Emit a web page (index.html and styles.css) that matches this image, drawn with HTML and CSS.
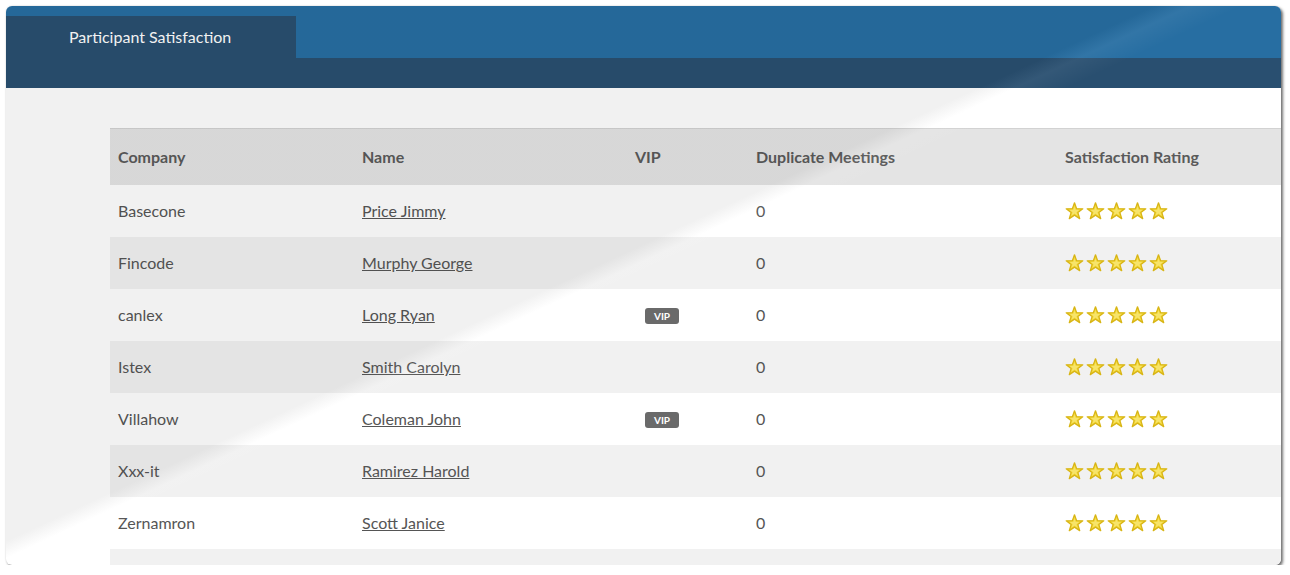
FILE: index.html
```html
<!DOCTYPE html>
<html>
<head>
<meta charset="utf-8">
<link rel="stylesheet" href="styles.css">
</head>
<body>
<svg width="0" height="0" class="defs">
  <defs>
    <symbol id="star" viewBox="0 0 19 18">
      <polygon points="9.5,0.8 11.6,6.6 17.8,6.8 12.9,10.6 14.7,16.6 9.5,13.1 4.3,16.6 6.1,10.6 1.2,6.8 7.4,6.6" fill="#f3d83c" stroke="#d8b515" stroke-width="1.3" stroke-linejoin="round"/>
      <polygon points="9.5,4.5 10.7,8 14.2,8.1 11.4,10.2 12.4,13.6 9.5,11.6 6.6,13.6 7.6,10.2 4.8,8.1 8.3,8" fill="#f7e46a"/>
    </symbol>
  </defs>
</svg>
<div class="window">
  <div class="topbar">
    <div class="tab">Participant Satisfaction</div>
  </div>
  <div class="subbar"></div>
  <div class="content">
    <table class="grid">
      <colgroup>
        <col class="c-company"><col class="c-name"><col class="c-vip"><col class="c-dup"><col class="c-sat">
      </colgroup>
      <thead>
        <tr><th>Company</th><th>Name</th><th>VIP</th><th>Duplicate Meetings</th><th>Satisfaction Rating</th></tr>
      </thead>
      <tbody>
        <tr><td>Basecone</td><td><a href="#">Price Jimmy</a></td><td></td><td>0</td><td class="stars"><svg><use href="#star"/></svg><svg><use href="#star"/></svg><svg><use href="#star"/></svg><svg><use href="#star"/></svg><svg><use href="#star"/></svg></td></tr>
        <tr><td>Fincode</td><td><a href="#">Murphy George</a></td><td></td><td>0</td><td class="stars"><svg><use href="#star"/></svg><svg><use href="#star"/></svg><svg><use href="#star"/></svg><svg><use href="#star"/></svg><svg><use href="#star"/></svg></td></tr>
        <tr><td>canlex</td><td><a href="#">Long Ryan</a></td><td><span class="vip">VIP</span></td><td>0</td><td class="stars"><svg><use href="#star"/></svg><svg><use href="#star"/></svg><svg><use href="#star"/></svg><svg><use href="#star"/></svg><svg><use href="#star"/></svg></td></tr>
        <tr><td>Istex</td><td><a href="#">Smith Carolyn</a></td><td></td><td>0</td><td class="stars"><svg><use href="#star"/></svg><svg><use href="#star"/></svg><svg><use href="#star"/></svg><svg><use href="#star"/></svg><svg><use href="#star"/></svg></td></tr>
        <tr><td>Villahow</td><td><a href="#">Coleman John</a></td><td><span class="vip">VIP</span></td><td>0</td><td class="stars"><svg><use href="#star"/></svg><svg><use href="#star"/></svg><svg><use href="#star"/></svg><svg><use href="#star"/></svg><svg><use href="#star"/></svg></td></tr>
        <tr><td>Xxx-it</td><td><a href="#">Ramirez Harold</a></td><td></td><td>0</td><td class="stars"><svg><use href="#star"/></svg><svg><use href="#star"/></svg><svg><use href="#star"/></svg><svg><use href="#star"/></svg><svg><use href="#star"/></svg></td></tr>
        <tr><td>Zernamron</td><td><a href="#">Scott Janice</a></td><td></td><td>0</td><td class="stars"><svg><use href="#star"/></svg><svg><use href="#star"/></svg><svg><use href="#star"/></svg><svg><use href="#star"/></svg><svg><use href="#star"/></svg></td></tr>
        <tr><td>&nbsp;</td><td></td><td></td><td></td><td></td></tr>
      </tbody>
    </table>
  </div>
  <div class="gloss"></div>
</div>
</body>
</html>
```
FILE: styles.css
```css
html, body {
  margin: 0;
  padding: 0;
  background: #ffffff;
}
body {
  font-family: Lato, "Open Sans", sans-serif;
  padding: 6px 0 0 6px;
}
.defs {
  position: absolute;
  width: 0;
  height: 0;
}
.window {
  position: relative;
  width: 1275px;
  height: 559px;
  border-radius: 6px;
  overflow: hidden;
  background: #ffffff;
  box-shadow: 2px 2px 3px rgba(0, 0, 0, 0.55), 0 0 2px rgba(0, 0, 0, 0.15);
}
.topbar {
  height: 52px;
  background: #276ea2;
  display: flex;
  align-items: flex-end;
}
.tab {
  width: 227px;
  height: 42px;
  line-height: 42px;
  padding-left: 63px;
  background: #294f70;
  color: #ffffff;
  font-size: 16px;
}
.subbar {
  height: 30px;
  background: #294f70;
}
.content {
  padding: 40px 0 0 104px;
}
.grid {
  border-collapse: collapse;
  width: 1250px;
  table-layout: fixed;
  color: #555555;
  font-size: 16px;
}
.c-company { width: 244px; }
.c-name { width: 273px; }
.c-vip { width: 121px; }
.c-dup { width: 309px; }
.grid thead tr {
  height: 56px;
  background: #e4e4e4;
  border-top: 1px solid #d2d2d2;
}
.grid th {
  text-align: left;
  font-weight: bold;
  padding: 0 8px;
  color: #5a5a5a;
}
.grid tbody tr {
  height: 52px;
}
.grid tbody tr:nth-child(odd) { background: #ffffff; }
.grid tbody tr:nth-child(even) { background: #f1f1f1; }
.grid td {
  padding: 0 8px;
  vertical-align: middle;
}
.grid a {
  color: #555555;
  text-decoration: underline;
}
.vip {
  display: inline-block;
  margin-left: 10px;
  width: 34px;
  height: 16px;
  line-height: 16px;
  border-radius: 3px;
  background: #6a6a6a;
  color: #ffffff;
  font-size: 10px;
  font-weight: bold;
  text-align: center;
  vertical-align: middle;
}
.stars {
  font-size: 0;
}
.stars svg {
  width: 19px;
  height: 18px;
  margin-right: 2px;
  vertical-align: middle;
}
.gloss {
  position: absolute;
  inset: 0;
  pointer-events: none;
  background: linear-gradient(155deg, rgba(0, 0, 0, 0.056) 46.4%, rgba(255, 255, 255, 0.05) 47.9%, rgba(255, 255, 255, 0) 50%);
}
```
